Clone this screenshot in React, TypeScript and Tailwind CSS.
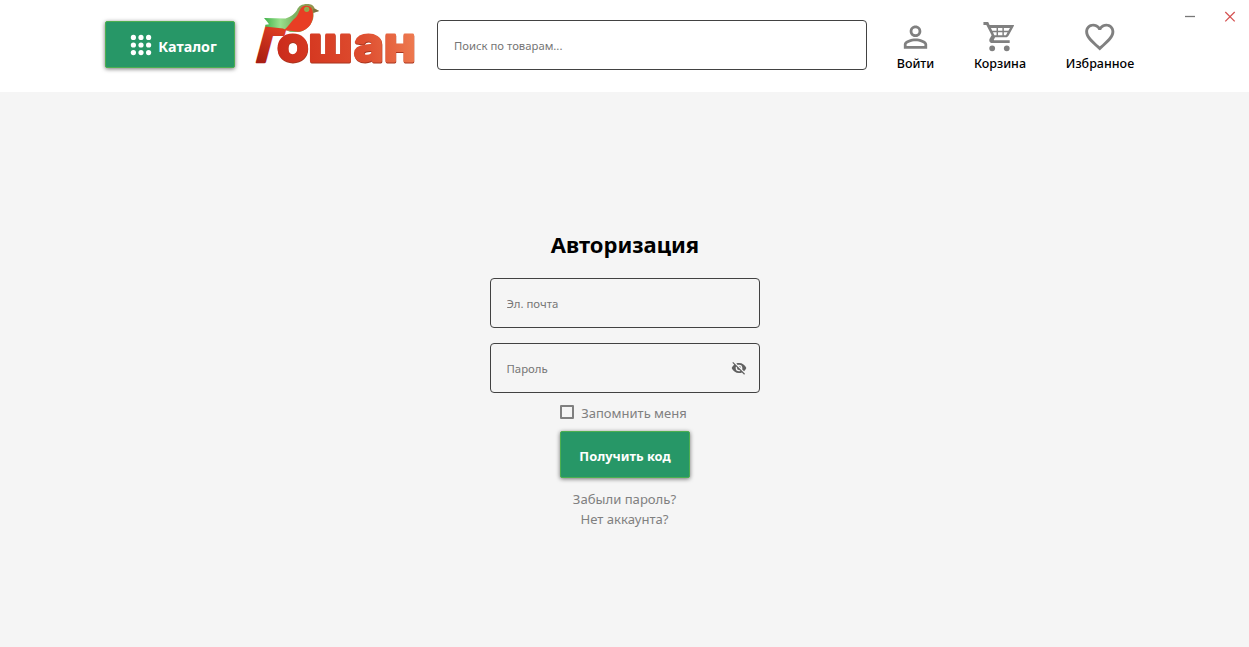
import type { ReactNode } from "react";

function GridIcon() {
  return (
    <svg width="22" height="22" viewBox="0 0 22 22" fill="#fff" className="shrink-0">
      {[3.4, 11, 18.6].map((y) =>
        [3.4, 11, 18.6].map((x) => <circle key={`${x}-${y}`} cx={x} cy={y} r="2.6" />),
      )}
    </svg>
  );
}

function Logo() {
  return (
    <svg width="164" height="90" viewBox="254 0 164 90" className="shrink-0 overflow-visible">
      <defs>
        <linearGradient id="word" gradientUnits="userSpaceOnUse" x1="250" y1="62" x2="385" y2="46">
          <stop offset="0" stopColor="#c8281a" />
          <stop offset="0.3" stopColor="#d63a22" />
          <stop offset="0.65" stopColor="#de4e30" />
          <stop offset="1" stopColor="#ee7a50" />
        </linearGradient>
        <linearGradient id="stem" gradientUnits="userSpaceOnUse" x1="0" y1="0" x2="14" y2="-34">
          <stop offset="0" stopColor="#a41c12" />
          <stop offset="1" stopColor="#dc3c22" />
        </linearGradient>
        <linearGradient id="tail" gradientUnits="userSpaceOnUse" x1="264" y1="0" x2="318" y2="0">
          <stop offset="0" stopColor="#3fb24a" />
          <stop offset="0.3" stopColor="#9be08e" />
          <stop offset="0.55" stopColor="#7cb463" />
          <stop offset="1" stopColor="#9a8a48" />
        </linearGradient>
      </defs>
      <text
        fontFamily="'Open Sans', sans-serif"
        fontWeight="800"
        fontSize="49"
        fill="url(#stem)"
        stroke="url(#stem)"
        strokeWidth="2.6"
        strokeLinejoin="round"
        transform="translate(253.8 61.7) skewX(-15) scale(.84 1)"
        x="0"
        y="0"
      >
        Г
      </text>
      <g
        fontFamily="Inter, 'Open Sans', sans-serif"
        fontWeight="700"
        fontSize="47.5"
        strokeWidth="2.8"
        strokeLinejoin="round"
        transform="scale(1.08 1)"
      >
        <text fill="#a8341e" stroke="#a8341e" x="256.7 285.7 327.9 355.6" y="62">ошан</text>
        <text fill="url(#word)" stroke="url(#word)" x="256.4 285.4 327.6 355.3" y="61.4">ошан</text>
      </g>
      <path
        d="M264 18 L285.5 18.5 C291 17 295 13.5 297 10 C298.5 6 302 4 307 4 C311 4 314 5.5 314.5 8.3 L319 11 L313.5 13 C314.5 21 309 29 300 32 L290 32 L283 28.5 L265 26.5 L265.5 24.7 L269 24.3 L267 21.5 Z"
        fill="url(#tail)"
      />
      <path
        d="M284 30 C288 27 291 22 293.5 19.5 C299 16 298.5 10 302 7 C305 4.8 310.5 5.5 312 9 C314 14 313 22 309 26.5 C306 30 300 32.4 295.5 31.6 C291.5 30.8 288 30.6 284 30 Z"
        fill="#e83e24"
      />
      <circle cx="306.7" cy="9.3" r="2.6" fill="#8fb04e" />
      <circle cx="306.7" cy="9.3" r="1" fill="#9aa050" />
      <path d="M313.2 8.4 L319.2 11 L313.4 12.4 Z" fill="#7a7040" />
    </svg>
  );
}

function NavItem({ label, children, className }: { label: string; children: ReactNode; className: string }) {
  return (
    <button className={`flex shrink-0 flex-col items-center ${className}`}>
      <svg width="35" height="35" viewBox="0 0 24 24" fill="#808080">
        {children}
      </svg>
      <span className="whitespace-nowrap text-[12.5px] leading-[18px] font-medium text-black">{label}</span>
    </button>
  );
}

const greenButton =
  "flex h-[47px] w-[130px] items-center justify-center rounded-[2px] border border-[#4caf50] bg-[#279767] font-bold text-white shadow-[0_1px_4px_rgba(0,0,0,0.55)]";

export default function App() {
  return (
    <div className="flex h-[647px] w-[1249px] flex-col bg-[#f5f5f5] font-['Noto_Sans','Open_Sans',sans-serif]">
      <header className="relative flex h-[92px] shrink-0 items-start bg-white pl-[105px]">
        <button className={`${greenButton} mt-[21px] gap-[6px] pt-px pl-[7px] text-[14.3px]`}>
          <GridIcon />
          <span className="pt-[3px]">Каталог</span>
        </button>
        <div className="ml-[19px]">
          <Logo />
        </div>
        <input
          aria-label="Поиск"
          placeholder="Поиск по товарам..."
          className="mt-[20px] ml-[19px] h-[50px] w-[430px] rounded-[4px] border border-[#424242] bg-white px-4 text-[11.3px] placeholder:text-[#757575]"
        />
        <NavItem label="Войти" className="mt-[20px] ml-[20px] w-[57px]">
          <path d="M12 5.9a2.1 2.1 0 1 1 0 4.2 2.1 2.1 0 0 1 0-4.2m0 9c2.97 0 6.1 1.46 6.1 2.1v1.1H5.9V17c0-.64 3.13-2.1 6.1-2.1M12 4C9.79 4 8 5.79 8 8s1.79 4 4 4 4-1.79 4-4-1.79-4-4-4m0 9c-2.67 0-8 1.34-8 4v3h16v-3c0-2.66-5.33-4-8-4" transform="translate(0 -.3)" />
        </NavItem>
        <NavItem label="Корзина" className="mt-[20px] ml-[17px] w-[78px]">
          <path d="M17 18a2 2 0 1 1 0 4 2 2 0 0 1 0-4M7 18a2 2 0 1 1 0 4 2 2 0 0 1 0-4M1 2h3.27l.94 2H22l-.25.96-3.58 6.47c-.34.61-.99 1.03-1.73 1.03H9l-.9 1.62-.03.12a.25.25 0 0 0 .25.25H19v2H7c-1.11 0-2-.89-2-2 0-.35.09-.68.24-.96l1.36-2.45L3 4H1zm5.14 4 .94 2H10V6zm1.41 3 .94 2H10V9zM11 6v2h3V6zm0 3v2h3V9zm4-3v2h3.1l1.1-2zm0 3v2h1.45l1.1-2z" fillRule="evenodd" transform="translate(-.7 -.6)" />
        </NavItem>
        <NavItem label="Избранное" className="mt-[20px] ml-[21px] w-[80px]">
          <path d="m12.1 18.55-.1.1-.11-.1C7.14 14.24 4 11.39 4 8.5 4 6.5 5.5 5 7.5 5c1.54 0 3.04 1 3.57 2.36h1.86C13.46 6 14.96 5 16.5 5c2 0 3.5 1.5 3.5 3.5 0 2.89-3.14 5.74-7.9 10.05M16.5 3c-1.74 0-3.41.81-4.5 2.08C10.91 3.81 9.24 3 7.5 3 4.42 3 2 5.41 2 8.5c0 3.77 3.4 6.86 8.55 11.53L12 21.35l1.45-1.32C18.6 15.36 22 12.27 22 8.5 22 5.41 19.58 3 16.5 3" transform="translate(-.5 -.5)" />
        </NavItem>
        <div className="absolute top-[10px] right-[13px] flex gap-[29px]">
          <svg width="10" height="13" viewBox="0 0 10 13"><path d="M0 6.5h10" stroke="#777" strokeWidth="1.3" /></svg>
          <svg width="12" height="13" viewBox="0 0 12 13"><path d="m1.3 2 9.4 9.4m0-9.4-9.4 9.4" stroke="#d55353" strokeWidth="1.3" /></svg>
        </div>
      </header>
      <main className="flex flex-col items-center pt-[136px]">
        <h1 className="pl-px text-[22px] leading-[32px] font-bold whitespace-nowrap text-black">Авторизация</h1>
        <input
          aria-label="Эл. почта"
          placeholder="Эл. почта"
          className="mt-[18px] h-[50px] w-[270px] rounded-[4px] border border-[#424242] px-4 text-[11.4px] placeholder:text-[#757575]"
        />
        <div className="mt-[15px] flex h-[50px] w-[270px] items-center rounded-[4px] border border-[#424242] pr-[12px] pl-4">
          <input
            type="password"
            aria-label="Пароль"
            placeholder="Пароль"
            className="min-w-0 flex-1 pt-px text-[11.4px] outline-none placeholder:text-[#757575]"
          />
          <svg width="16" height="16" viewBox="0 0 24 24" fill="#606060">
            <path d="M11.83 9 15 12.16V12a3 3 0 0 0-3-3zm-4.3.8 1.55 1.55c-.05.21-.08.42-.08.65a3 3 0 0 0 3 3c.22 0 .44-.03.65-.08l1.55 1.55c-.67.33-1.41.53-2.2.53a5 5 0 0 1-5-5c0-.79.2-1.53.53-2.2M2 4.27l2.28 2.28.45.45C3.08 8.3 1.78 10 1 12c1.73 4.39 6 7.5 11 7.5 1.55 0 3.03-.3 4.38-.84l.43.42L19.73 22 21 20.73 3.27 3M12 7a5 5 0 0 1 5 5c0 .64-.13 1.26-.36 1.82l2.93 2.93c1.5-1.25 2.7-2.89 3.43-4.75-1.73-4.39-6-7.5-11-7.5-1.4 0-2.74.25-4 .7l2.17 2.15C10.74 7.13 11.35 7 12 7" />
          </svg>
        </div>
        <label className="mt-[10px] mr-[2px] flex h-[20px] items-center gap-[7px] text-[13px] text-[#808080]">
          <span className="mb-[2px] h-[14px] w-[14px] rounded-[1px] border-2 border-[#808080]" />
          <span className="pt-px whitespace-nowrap">Запомнить меня</span>
        </label>
        <button className={`${greenButton} mt-[8px] pt-[4px] pl-px text-[12.9px]`}>Получить код</button>
        <div className="mt-[11px] flex flex-col items-center text-[13.1px] leading-[20px] text-[#808080]">
          <a>Забыли пароль?</a>
          <a>Нет аккаунта?</a>
        </div>
      </main>
    </div>
  );
}
